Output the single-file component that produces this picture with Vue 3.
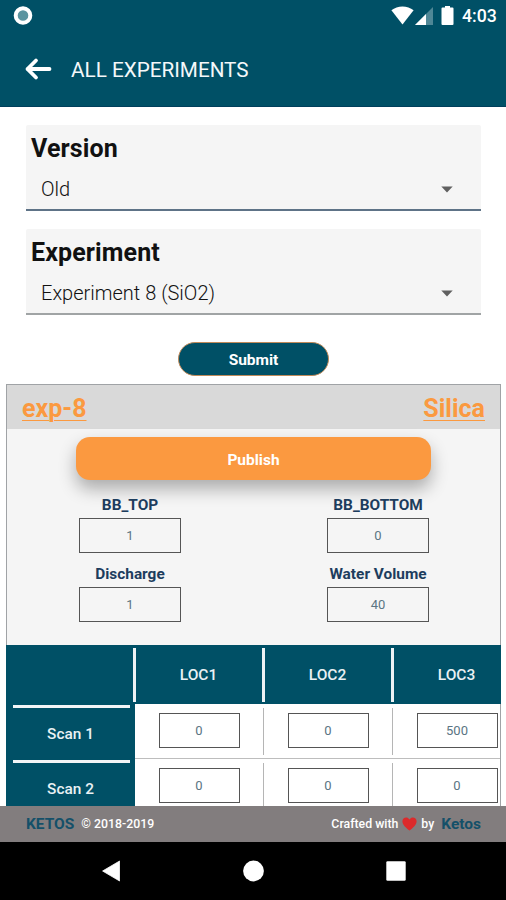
<template>
  <div class="screen">
    <header class="top">
      <div class="status-bar">
        <svg class="record" width="20" height="20" viewBox="0 0 20 20">
          <circle cx="10" cy="9.5" r="7.3" fill="#5b949f" stroke="#fff" stroke-width="4" />
        </svg>
        <div class="status-icons">
          <svg class="wifi" width="23" height="19" viewBox="0 0 23 19">
            <path d="M0.4 4.2C6.5-0.9 16.5-0.9 22.6 4.2L11.5 18.4Z" fill="#fff" />
          </svg>
          <svg class="signal" width="18" height="18" viewBox="0 0 18 18">
            <path d="M18 0V18H0Z" fill="#4f8796" />
            <path d="M11 7V18H0Z" fill="#fff" />
          </svg>
          <svg class="battery" width="13" height="19" viewBox="0 0 13 19">
            <path d="M4 0H9V1.5H11.5Q12.5 1.5 12.5 2.5V18Q12.5 19 11.5 19H1.5Q0.5 19 0.5 18V2.5Q0.5 1.5 1.5 1.5H4Z" fill="#fff" />
          </svg>
          <span class="clock">4:03</span>
        </div>
      </div>
      <div class="app-bar">
        <svg class="back" width="28" height="24" viewBox="0 0 28 24">
          <path
            d="M12 3.5L3.5 12L12 20.5M3.5 12H25.5"
            fill="none"
            stroke="#fff"
            stroke-width="3.8"
            stroke-linecap="round"
            stroke-linejoin="round"
          />
        </svg>
        <h1>ALL EXPERIMENTS</h1>
      </div>
    </header>

    <main class="content">
      <div
        v-for="picker in pickers"
        :key="picker.label"
        class="picker"
        :class="{ focused: picker.label === activePicker }"
        @click="activePicker = picker.label"
      >
        <label>{{ picker.label }}</label>
        <div class="picker-value">
          <span>{{ picker.value }}</span>
          <svg width="12" height="7" viewBox="0 0 12 7">
            <path d="M0.3 0.5H11.7L6 6.5Z" fill="#606060" />
          </svg>
        </div>
      </div>

      <button class="submit">Submit</button>

      <section class="result">
        <div class="result-head">
          <a>exp-8</a>
          <a>Silica</a>
        </div>
        <div class="result-body">
          <button class="publish">Publish</button>
          <div class="params">
            <div v-for="param in params" :key="param.name" class="param">
              <span class="param-name">{{ param.name }}</span>
              <span class="box">{{ param.value }}</span>
            </div>
          </div>
        </div>

        <div class="table">
          <div class="row head-row">
            <div class="cell corner"></div>
            <div v-for="loc in locations" :key="loc" class="cell head-cell">{{ loc }}</div>
          </div>
          <div v-for="scan in scans" :key="scan.name" class="row scan-row">
            <div class="cell scan-name">{{ scan.name }}</div>
            <div v-for="(value, i) in scan.values" :key="i" class="cell value-cell">
              <span class="box">{{ value }}</span>
            </div>
          </div>
        </div>
      </section>
    </main>

    <footer class="credits">
      <div class="credits-left"><b>KETOS</b><span>© 2018-2019</span></div>
      <div class="credits-right">
        <span>Crafted with</span>
        <svg width="15" height="14" viewBox="0 0 15 14">
          <path
            d="M7.5 13.6C4.5 11.2 0.4 8.3 0.4 4.3C0.4 0.2 5.6-0.8 7.5 2.6C9.4-0.8 14.6 0.2 14.6 4.3C14.6 8.3 10.5 11.2 7.5 13.6Z"
            fill="#dc2a2b"
          />
        </svg>
        <span>by</span>
        <b>Ketos</b>
      </div>
    </footer>

    <nav class="nav-bar">
      <svg width="18" height="22" viewBox="0 0 18 22">
        <path d="M17.6 1V21L0.6 11Z" fill="#fff" stroke="#fff" stroke-width="0.8" stroke-linejoin="round" />
      </svg>
      <svg width="22" height="22" viewBox="0 0 22 22">
        <circle cx="11.5" cy="11" r="10.4" fill="#fff" />
      </svg>
      <svg width="20" height="20" viewBox="0 0 20 20">
        <rect x="0.3" y="0.3" width="19.4" height="19.4" rx="1.2" fill="#fff" />
      </svg>
    </nav>
  </div>
</template>

<script setup>
import { ref } from 'vue';

// --- 下拉选择 ---
const activePicker = ref('Version');
const pickers = ref([
  { label: 'Version', value: 'Old' },
  { label: 'Experiment', value: 'Experiment 8 (SiO2)' },
]);

// --- 实验参数 ---
const params = ref([
  { name: 'BB_TOP', value: 1 },
  { name: 'BB_BOTTOM', value: 0 },
  { name: 'Discharge', value: 1 },
  { name: 'Water Volume', value: 40 },
]);

// --- 扫描数据 ---
const locations = ['LOC1', 'LOC2', 'LOC3'];
const scans = ref([
  { name: 'Scan 1', values: [0, 0, 500] },
  { name: 'Scan 2', values: [0, 0, 0] },
]);
</script>

<style>
body {
  margin: 0;
  background: #fff;
}
</style>

<style scoped>
.screen {
  width: 506px;
  height: 900px;
  display: flex;
  flex-direction: column;
  overflow: hidden;
  background: #fff;
  font-family: Roboto, "Liberation Sans", sans-serif;
}

svg {
  display: block;
  flex: none;
}

button {
  display: block;
  padding: 0;
  font-family: inherit;
  cursor: pointer;
}

.top {
  height: 107px;
  flex: none;
  box-sizing: border-box;
  border-bottom: 1px solid #003f5c;
  background: #005066;
}

.status-bar {
  height: 31px;
  display: flex;
  align-items: center;
  justify-content: space-between;
  padding: 0 9px 0 13px;
}

.status-icons {
  display: flex;
  align-items: center;
}

.signal {
  margin-left: 1px;
  margin-top: 1px;
}

.battery {
  margin-left: 8px;
}

.clock {
  margin-left: 8px;
  width: 35px;
  padding-top: 1px;
  font-size: 17.7px;
  line-height: 30px;
  font-weight: 500;
  color: #fff;
  white-space: nowrap;
}

.app-bar {
  height: 76px;
  display: flex;
  align-items: center;
  padding-left: 24px;
}

.app-bar h1 {
  margin: 2px 0 0 19px;
  font-size: 20.7px;
  font-weight: 400;
  line-height: 26px;
  color: #f4f8fa;
}

.content {
  flex: 1;
  min-height: 0;
  overflow: hidden;
  padding-top: 18px;
}

.picker {
  width: 455px;
  height: 86px;
  box-sizing: border-box;
  margin: 0 0 18px 26px;
  border-bottom: 2px solid #a0a4a5;
  border-radius: 2px 2px 0 0;
  background: #f5f5f5;
}

.picker.focused {
  border-bottom-color: #5e7387;
}

.picker label {
  display: block;
  padding: 9px 0 0 5px;
  font-size: 25px;
  line-height: 30px;
  font-weight: 700;
  letter-spacing: 0.12px;
  color: #111;
}

.picker-value {
  display: flex;
  align-items: center;
  justify-content: space-between;
  padding: 13px 28px 0 15px;
  font-size: 20px;
  line-height: 25px;
  font-weight: 300;
  color: #111;
}

.submit {
  width: 151px;
  height: 34px;
  margin: 27px 0 8px 178px;
  padding-top: 1px;
  border: 1.5px solid #c08a5a;
  border-radius: 17px;
  background: #005066;
  color: #fff;
  font-size: 15.5px;
  font-weight: 700;
}

.result {
  width: 495px;
  box-sizing: border-box;
  margin-left: 6px;
  border: 1px solid #a0a3a6;
  border-bottom: 0;
  background: #f5f5f5;
}

.result-head {
  height: 44px;
  display: flex;
  align-items: center;
  justify-content: space-between;
  padding: 0 15px;
  background: #d9d9d9;
}

.result-head a {
  padding-top: 3px;
  font-size: 25px;
  line-height: 30px;
  font-weight: 700;
  color: #fb9940;
  text-decoration: underline;
  text-decoration-thickness: 1.2px;
  text-underline-offset: 3px;
}

.result-body {
  height: 216px;
  box-sizing: border-box;
  padding-top: 8px;
}

.publish {
  width: 355px;
  height: 43px;
  margin-left: 69px;
  padding-top: 2px;
  border: 0;
  border-radius: 14px;
  background: #fb9940;
  box-shadow: 0 9px 17px rgba(0, 0, 0, 0.3);
  color: #fff;
  font-size: 15.5px;
  font-weight: 700;
}

.params {
  width: 496px;
  display: grid;
  grid-template-columns: 248px 248px;
  grid-auto-rows: 69px;
  margin: 14px 0 0 -1px;
}

.param {
  display: flex;
  flex-direction: column;
  align-items: center;
}

.param-name {
  padding-top: 1px;
  font-size: 15.4px;
  line-height: 20px;
  font-weight: 700;
  color: #1d3d5e;
}

.box {
  display: flex;
  align-items: center;
  justify-content: center;
  width: 82px;
  height: 35px;
  box-sizing: border-box;
  border: 1px solid #555;
  font-size: 13px;
  font-weight: 400;
  color: #5b7583;
}

.param .box {
  width: 102px;
  margin-top: 3px;
}

.table {
  width: 495px;
  margin-left: -1px;
  overflow: hidden;
}

.row {
  display: grid;
  grid-template-columns: repeat(4, 129px);
}

.head-row {
  height: 59px;
  background: #005066;
}

.cell {
  display: flex;
  align-items: center;
  justify-content: center;
  box-sizing: border-box;
}

.head-cell {
  position: relative;
  padding: 1px 2px 0 0;
  font-size: 15.5px;
  font-weight: 500;
  color: #e9f1f4;
}

.head-cell::before {
  content: "";
  position: absolute;
  left: -2px;
  top: 3px;
  width: 3px;
  height: 54px;
  background: #eef2f5;
}

.scan-row {
  height: 55px;
  background: #fff;
}

.scan-name {
  position: relative;
  padding-top: 4px;
  background: #005066;
  font-size: 15.4px;
  font-weight: 500;
  color: #e9f1f4;
}

.scan-name::before {
  content: "";
  position: absolute;
  left: 7px;
  top: 1px;
  width: 117px;
  height: 3px;
  background: #f2f5f7;
}

.value-cell {
  position: relative;
  border-bottom: 1px solid #bdbdbd;
}

.value-cell + .value-cell::before {
  content: "";
  position: absolute;
  left: -1px;
  top: 4px;
  width: 1px;
  height: 47px;
  background: #b5b5b5;
}

/* 最后一列被面板右边框截断 */
.value-cell:last-child::after {
  content: "";
  position: absolute;
  left: 107px;
  top: 0;
  width: 1px;
  height: 55px;
  background: #a0a3a6;
}

.value-cell .box {
  width: 81px;
  margin: 0 1px 1px 0;
}

.credits {
  height: 36px;
  flex: none;
  display: flex;
  align-items: center;
  justify-content: space-between;
  padding: 0 25px 0 26px;
  background: #827d7e;
  color: #fff;
  font-size: 12.3px;
  font-weight: 500;
}

.credits-left,
.credits-right {
  display: flex;
  align-items: center;
}

.credits b {
  font-size: 15.5px;
  font-weight: 700;
  color: #145069;
}

.credits-left span {
  margin-left: 7px;
}

.credits-right svg {
  margin: 0 4px;
}

.credits-right b {
  margin-left: 7px;
}

.nav-bar {
  height: 58px;
  flex: none;
  display: flex;
  align-items: center;
  justify-content: space-between;
  box-sizing: border-box;
  padding: 0 100px 0 102px;
  background: #000;
}
</style>
